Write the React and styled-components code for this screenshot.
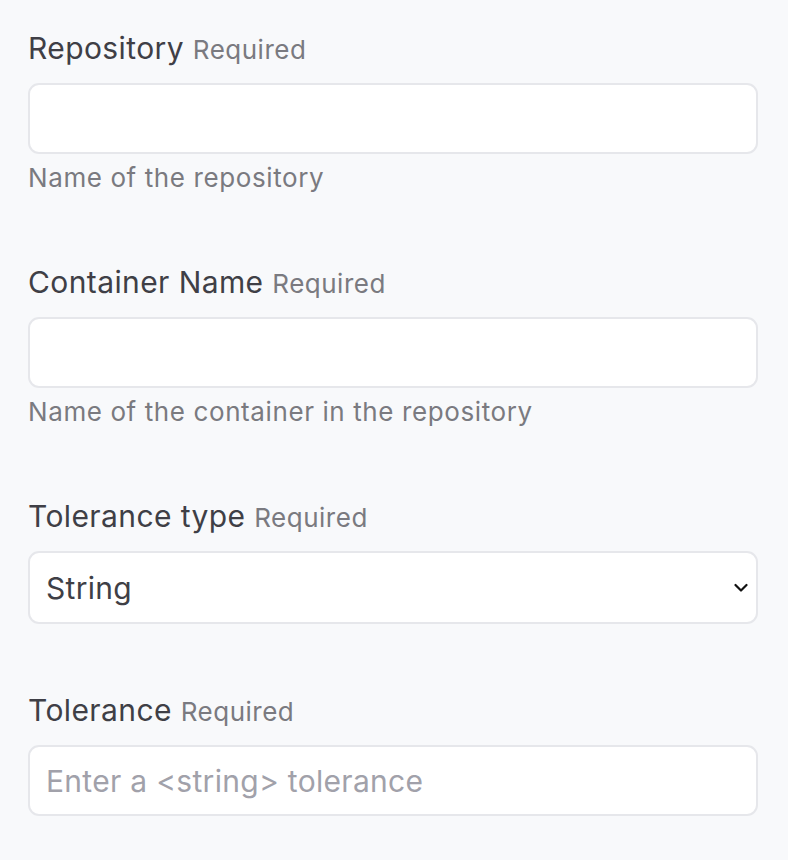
import React from 'react'
import styled, { createGlobalStyle } from 'styled-components'

const GlobalStyle = createGlobalStyle`
  body {
    margin: 0;
    background: #f8f9fb;
    font-family: Inter, "Liberation Sans", sans-serif;
  }
`;

const Form = styled.form`
  display: flex;
  flex-direction: column;
  padding: 27px 30px 0 28px;
`;

const Field = styled.div`
  display: flex;
  flex-direction: column;
  margin-bottom: ${p => p.$gap || '69px'};
`;

const Label = styled.label`
  font-size: 30px;
  line-height: 42px;
  letter-spacing: 0.4px;
  color: #3f3f46;
  margin-bottom: 12px;
`;

const Required = styled.span`
  font-size: 26px;
  letter-spacing: 0.5px;
  color: #7a7a80;
`;

const TextInput = styled.input`
  box-sizing: border-box;
  height: 71px;
  width: 100%;
  padding: 0 16px;
  font-family: inherit;
  font-size: 30px;
  letter-spacing: 0.3px;
  color: #3f3f46;
  background: #fff;
  border: 2px solid #e6e7eb;
  border-radius: 11px;
  outline: none;

  &::placeholder {
    color: #a1a1aa;
  }
`;

const SelectWrap = styled.div`
  position: relative;
`;

const Select = styled.select`
  box-sizing: border-box;
  appearance: none;
  height: 73px;
  width: 100%;
  padding: 0 16px;
  font-family: inherit;
  font-size: 30px;
  letter-spacing: 0.3px;
  color: #3f3f46;
  background: #fff;
  border: 2px solid #e6e7eb;
  border-radius: 11px;
  outline: none;
`;

const Chevron = styled.svg`
  position: absolute;
  right: 10px;
  top: 50%;
  transform: translateY(-50%);
  pointer-events: none;
`;

const Help = styled.div`
  font-size: 26px;
  line-height: 30px;
  letter-spacing: 0.6px;
  color: #7a7a80;
  margin-top: 9px;
  margin-bottom: -1px;
`;

function App() {
  return (
    <>
      <GlobalStyle />
      <Form>
        <Field>
          <Label>Repository <Required>Required</Required></Label>
          <TextInput />
          <Help>Name of the repository</Help>
        </Field>
        <Field>
          <Label>Container Name <Required>Required</Required></Label>
          <TextInput />
          <Help>Name of the container in the repository</Help>
        </Field>
        <Field $gap="65px">
          <Label>Tolerance type <Required>Required</Required></Label>
          <SelectWrap>
            <Select defaultValue="string">
              <option value="string">String</option>
              <option value="number">Number</option>
            </Select>
            <Chevron width="14" height="14" viewBox="0 0 14 14">
              <path d="M1.5 4L7 9.5 12.5 4" fill="none" stroke="#111" strokeWidth="2.2" strokeLinecap="round" strokeLinejoin="round" />
            </Chevron>
          </SelectWrap>
        </Field>
        <Field $gap="0">
          <Label>Tolerance <Required>Required</Required></Label>
          <TextInput placeholder="Enter a <string> tolerance" />
        </Field>
      </Form>
    </>
  )
}

export default App
